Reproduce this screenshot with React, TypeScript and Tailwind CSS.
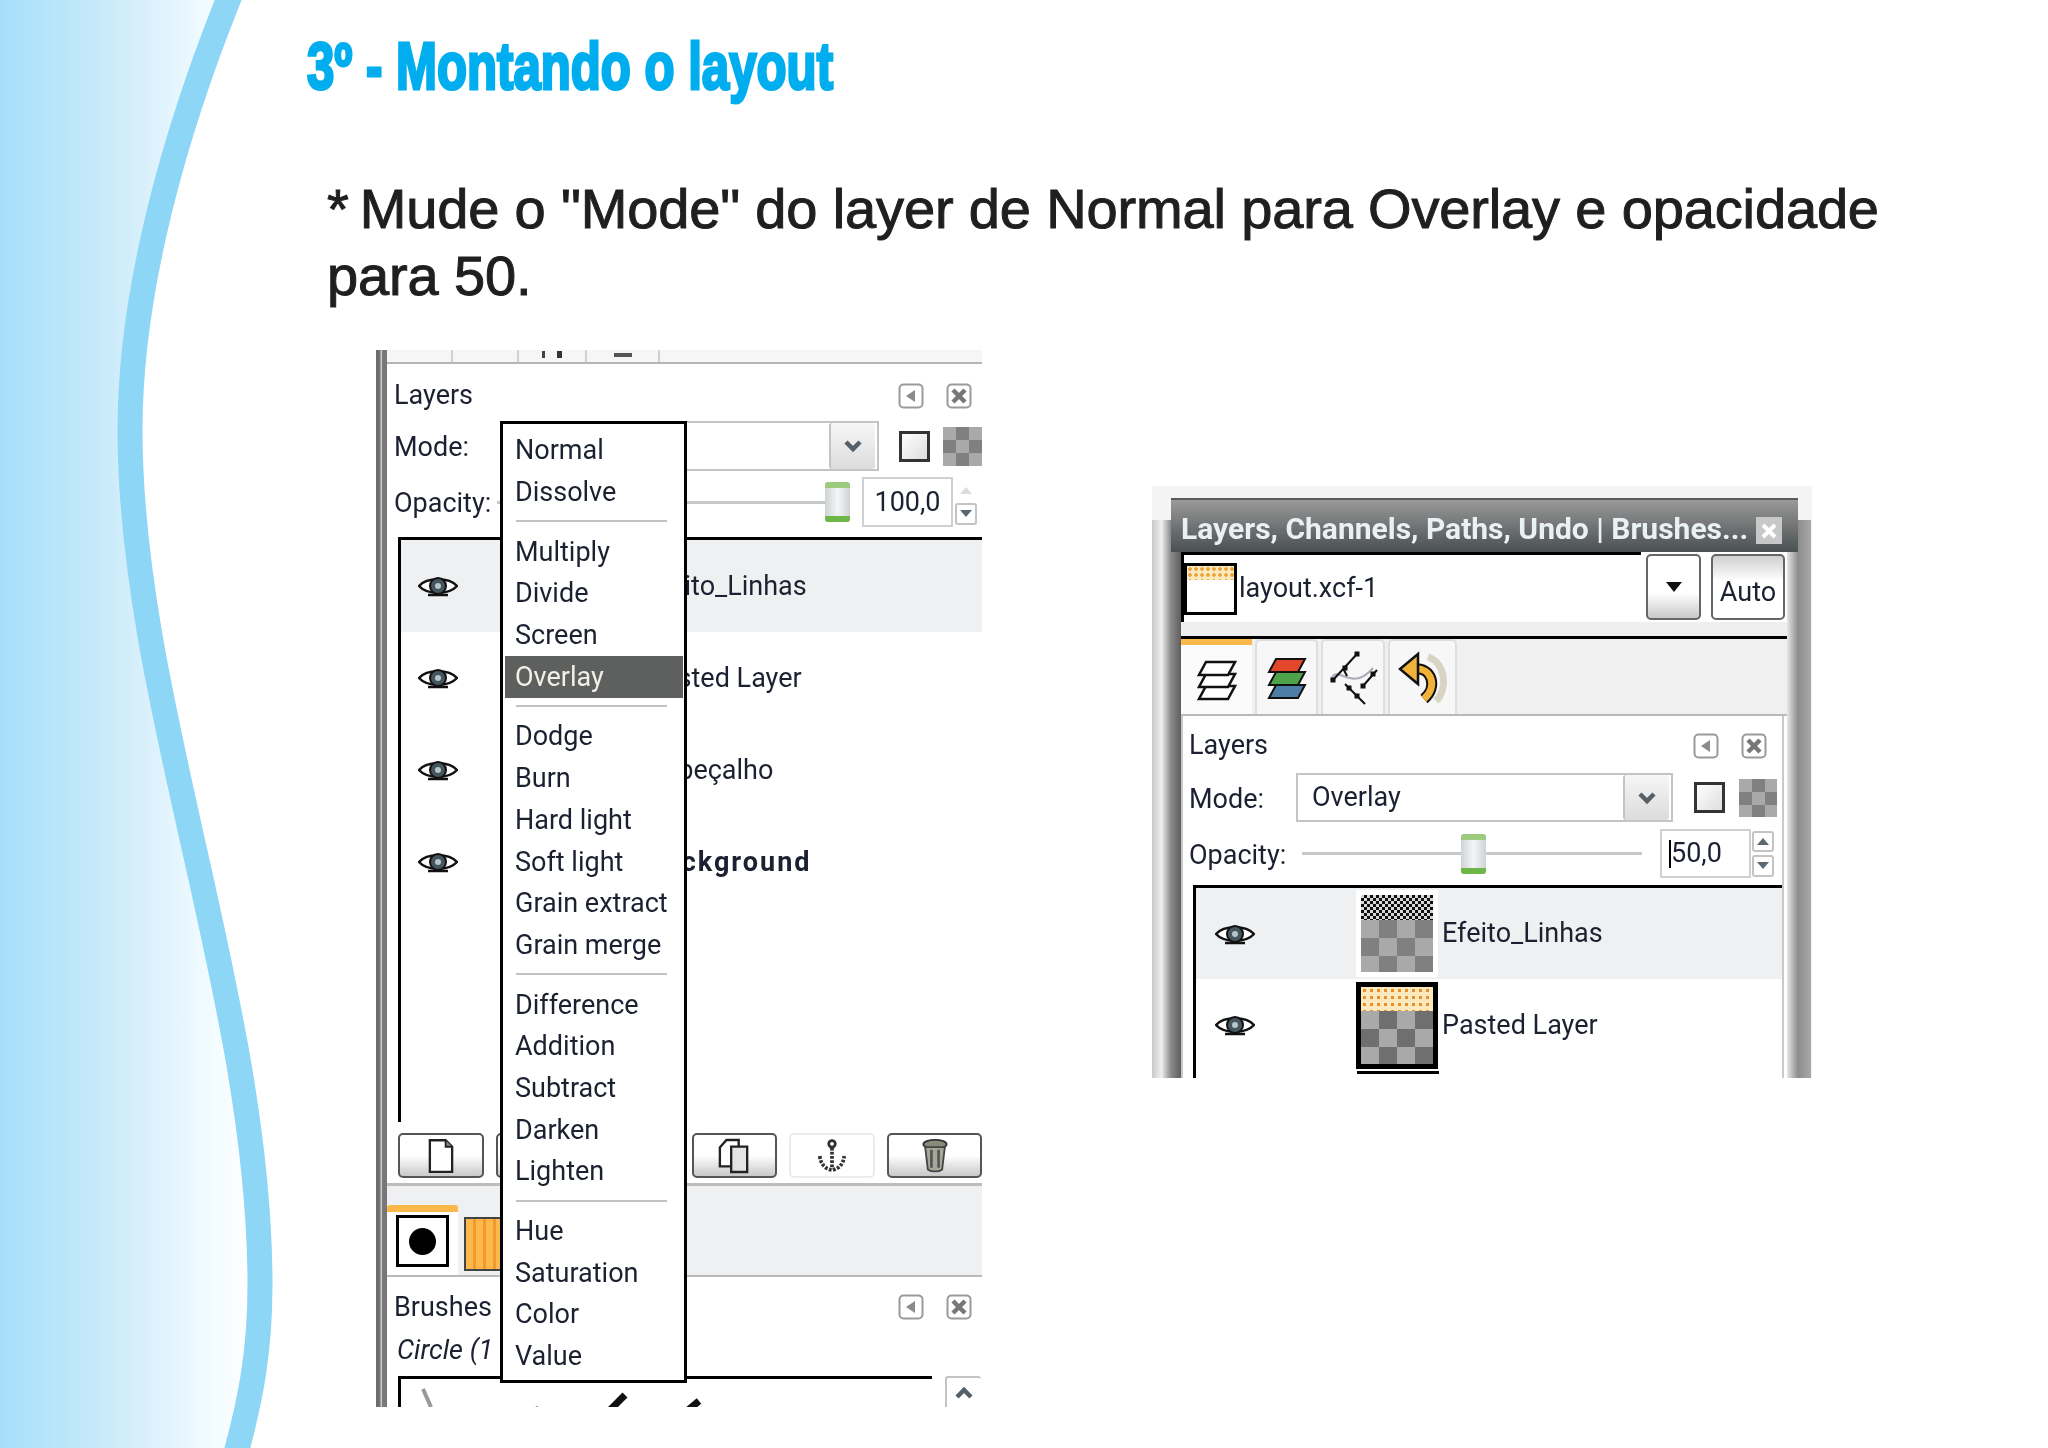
const ui = "font-['Roboto',sans-serif] text-[27px] leading-none text-[#1b2130] whitespace-nowrap";

const modeGroups = [
  ['Normal', 'Dissolve'],
  ['Multiply', 'Divide', 'Screen', 'Overlay'],
  ['Dodge', 'Burn', 'Hard light', 'Soft light', 'Grain extract', 'Grain merge'],
  ['Difference', 'Addition', 'Subtract', 'Darken', 'Lighten'],
  ['Hue', 'Saturation', 'Color', 'Value'],
];

function Eye() {
  return (
    <svg viewBox="0 0 40 24" className="h-[24px] w-[40px] shrink-0">
      <path d="M1 12 C9 3 31 3 39 12 C31 21 9 21 1 12 Z" fill="#fff" stroke="#111" strokeWidth="2.5" />
      <circle cx="20" cy="12" r="8" fill="#46565f" stroke="#111" strokeWidth="2" />
      <circle cx="20" cy="12" r="3" fill="#b9c4c9" />
      <path d="M10 21 H30" stroke="#111" strokeWidth="2.5" />
    </svg>
  );
}

function DockButtons() {
  return (
    <div className="ml-auto flex gap-[22px]">
      <svg viewBox="0 0 26 26" className="h-[26px] w-[26px]">
        <rect x="1.5" y="1.5" width="23" height="23" rx="4" fill="#fff" stroke="#9a9a9a" strokeWidth="2" />
        <path d="M17 7 V19 L8 13 Z" fill="#8b8b8b" />
      </svg>
      <svg viewBox="0 0 26 26" className="h-[26px] w-[26px]">
        <rect x="1.5" y="1.5" width="23" height="23" rx="4" fill="#fff" stroke="#9a9a9a" strokeWidth="2" />
        <path d="M7 7 L19 19 M19 7 L7 19" stroke="#777" strokeWidth="4.5" />
      </svg>
    </div>
  );
}

function ComboArrow() {
  return (
    <div className="ml-auto flex h-full w-[46px] items-center justify-center rounded-[3px] border-l-2 border-[#c4c4c4] bg-gradient-to-b from-[#f6f6f6] to-[#dcdcdc]">
      <svg viewBox="0 0 20 14" className="h-[14px] w-[20px]">
        <path d="M3 3 L10 10 L17 3" fill="none" stroke="#566068" strokeWidth="4.5" />
      </svg>
    </div>
  );
}

function Thumb({ className }: { className: string }) {
  return (
    <div className={`flex h-[40px] flex-col justify-between rounded-[3px] bg-gradient-to-r from-[#cfd3d6] via-[#f4f5f5] to-[#cfd3d6] ${className}`}>
      <div className="h-[6px] rounded-t-[3px] bg-[#9ccb7f]" />
      <div className="h-[6px] rounded-b-[3px] bg-[#6fb648]" />
    </div>
  );
}

function Spin({ dim }: { dim?: boolean }) {
  return (
    <div className="flex w-[22px] flex-col gap-[3px]">
      <div className={`flex h-[21px] items-center justify-center rounded-[3px] ${dim ? '' : 'border-2 border-[#c4c4c4]'}`}>
        <svg viewBox="0 0 14 10" className="h-[10px] w-[14px]">
          <path d="M1 9 L7 2 L13 9 Z" fill={dim ? '#dcdcdc' : '#5c6770'} />
        </svg>
      </div>
      <div className="flex h-[22px] items-center justify-center rounded-[3px] border-2 border-[#c4c4c4]">
        <svg viewBox="0 0 14 10" className="h-[10px] w-[14px]">
          <path d="M1 1 L7 8 L13 1 Z" fill="#5c6770" />
        </svg>
      </div>
    </div>
  );
}

function Checkbox() {
  return <div className="h-[31px] w-[31px] border-[3px] border-[#333] bg-gradient-to-br from-white to-[#dedede]" />;
}

function ToolButton({ className, children }: { className: string; children?: React.ReactNode }) {
  return (
    <div className={`flex h-[45px] items-center justify-center rounded-[5px] border-2 border-[#555] bg-gradient-to-b from-white from-50% to-[#c9c9c9] ${className}`}>
      {children}
    </div>
  );
}

function LayerRow({ name, bold, active }: { name: string; bold?: boolean; active?: boolean }) {
  return (
    <div className={`flex h-[92px] items-center pl-[17px] ${active ? 'bg-[#eff0f1]' : ''}`}>
      <Eye />
      <span className={`${ui} ml-[188px] ${bold ? 'font-bold tracking-[2px]' : ''}`}>{name}</span>
    </div>
  );
}

function ModeMenu() {
  return (
    <div className="absolute left-[124px] top-[71px] flex h-[962px] w-[187px] flex-col border-[3px] border-black bg-white pt-[6px]">
      {modeGroups.map((group, i) => (
        <div key={group[0]}>
          {i > 0 && (
            <div className="flex h-[18px] pl-[13px] pt-[7px]">
              <div className="h-[2px] w-[151px] bg-[#c2c2c2]" />
            </div>
          )}
          {group.map((item) => (
            <div
              key={item}
              className={`flex h-[41.7px] items-center pl-[12px] ${ui} ${item === 'Overlay' ? 'mr-[1px] ml-[2px] !pl-[10px] bg-[#5d605f] !text-[#f2efe6]' : ''}`}
            >
              {item}
            </div>
          ))}
        </div>
      ))}
    </div>
  );
}

function LeftPanel() {
  return (
    <div className="relative flex h-[1057px] w-[606px] overflow-hidden bg-white blur-[0.5px]">
      <div className="w-[11px] shrink-0 bg-gradient-to-r from-[#6d6d6d] from-30% via-[#c9c9c9] via-50% to-[#777] to-60%" />
      <div className="flex min-w-0 flex-1 flex-col">
        <div className="flex h-[14px] shrink-0 border-b-2 border-[#b5b5b5] bg-[#f6f6f6] pl-[64px]">
          <div className="w-[68px] border-x-2 border-[#d0d0d0]" />
          <div className="flex w-[68px] justify-center gap-[12px] border-r-2 border-[#d0d0d0]">
            <div className="mt-[1px] h-[7px] w-[3px] bg-[#444]" />
            <div className="mt-[1px] h-[7px] w-[5px] bg-[#333]" />
          </div>
          <div className="flex w-[73px] justify-center border-r-2 border-[#d0d0d0]">
            <div className="mt-[3px] h-[4px] w-[18px] bg-[#555]" />
          </div>
        </div>
        <div className="flex h-[57px] shrink-0 items-center pl-[7px] pr-[10px] pt-[6px]">
          <span className={ui}>Layers</span>
          <DockButtons />
        </div>
        <div className="flex h-[50px] shrink-0 items-center pl-[7px]">
          <span className={`${ui} w-[112px] pt-[3px]`}>Mode:</span>
          <div className="h-full w-[378px] border-2 border-[#c4c4c4] pr-[2px]">
            <div className="flex h-full"><ComboArrow /></div>
          </div>
          <div className="ml-[20px]"><Checkbox /></div>
          <div className="ml-[13px] h-[39px] w-[39px] bg-[repeating-conic-gradient(#808080_0_25%,#a9a9a9_0_50%)] bg-[length:26px_26px]" />
        </div>
        <div className="mt-[4px] flex h-[54px] shrink-0 items-center pl-[7px]">
          <span className={`${ui} w-[103px] pt-[3px]`}>Opacity:</span>
          <div className="h-[3px] w-[328px] bg-[#c8c8c8]" />
          <Thumb className="w-[25px]" />
          <div className={`${ui} ml-[12px] flex h-[50px] w-[91px] items-center justify-center border-2 border-[#d0d0d0]`}>100,0</div>
          <div className="ml-[2px]"><Spin dim /></div>
        </div>
        <div className="ml-[11px] mt-[8px] h-[585px] shrink-0 border-l-[3px] border-t-[3px] border-black">
          <LayerRow name="Efeito_Linhas" active />
          <LayerRow name="Pasted Layer" />
          <LayerRow name="Cabeçalho" />
          <LayerRow name="Background" bold />
        </div>
        <div className="ml-[11px] mt-[11px] flex shrink-0 gap-[12px]">
          <ToolButton className="w-[86px]">
            <svg viewBox="0 0 28 38" className="h-[36px] w-[26px]">
              <path d="M2 2 H19 L26 9 V36 H2 Z" fill="#fff" stroke="#222" strokeWidth="2.5" />
              <path d="M19 2 V9 H26" fill="#888" stroke="#222" strokeWidth="2" />
            </svg>
          </ToolButton>
          <ToolButton className="w-[86px]" />
          <ToolButton className="w-[86px]" />
          <ToolButton className="w-[86px]">
            <svg viewBox="0 0 34 38" className="h-[36px] w-[32px]">
              <path d="M9 2 H22 V30 H2 V10 Z" fill="#fff" stroke="#222" strokeWidth="2.5" />
              <path d="M14 9 H31 V36 H14 Z" fill="#e4e4e4" stroke="#222" strokeWidth="2.5" />
            </svg>
          </ToolButton>
          <div className="flex h-[45px] w-[86px] items-center justify-center rounded-[5px] border-2 border-[#ececec]">
            <svg viewBox="0 0 32 36" className="h-[34px] w-[30px]">
              <circle cx="16" cy="5" r="3.5" fill="none" stroke="#333" strokeWidth="3" />
              <path d="M16 9 V32 M3 18 C4 28 10 32 16 33 C22 32 28 28 29 18" fill="none" stroke="#333" strokeWidth="4" strokeDasharray="3 1.5" />
            </svg>
          </div>
          <ToolButton className="w-[95px]">
            <svg viewBox="0 0 30 38" className="h-[34px] w-[28px]">
              <ellipse cx="15" cy="6" rx="13" ry="5" fill="#8a8a7c" stroke="#333" strokeWidth="2" />
              <path d="M4 9 L7 34 C11 37 19 37 23 34 L26 9 Z" fill="#a8a89a" stroke="#444" strokeWidth="2" />
              <path d="M11 12 V32 M19 12 V32" stroke="#555" strokeWidth="3" />
            </svg>
          </ToolButton>
        </div>
        <div className="mt-[5px] h-[3px] shrink-0 bg-[#bdbdbd]" />
        <div className="h-[19px] shrink-0 bg-[#eff0f1]" />
        <div className="flex h-[72px] shrink-0 items-start border-b-2 border-[#b9b9b9] bg-[#eff0f1]">
          <div className="flex h-full w-[71px] items-start justify-center rounded-t-[3px] border-t-[7px] border-[#fab84a] bg-white pt-[3px]">
            <div className="flex h-[52px] w-[53px] items-center justify-center border-[3px] border-black bg-white">
              <div className="h-[27px] w-[27px] rounded-full bg-black" />
            </div>
          </div>
          <div className="ml-[6px] mt-[12px] h-[54px] w-[60px] border-2 border-[#444] bg-[repeating-linear-gradient(90deg,#fdb94d_0_7px,#f39a2b_7px_10px)]" />
        </div>
        <div className="flex h-[60px] shrink-0 items-center pl-[7px] pr-[10px]">
          <span className={ui}>Brushes</span>
          <DockButtons />
        </div>
        <span className={`${ui} pl-[10px] italic`}>Circle (1</span>
        <div className="ml-[11px] mt-[12px] flex flex-1">
          <div className="relative w-[534px] border-l-[3px] border-t-[3px] border-black">
            <svg viewBox="0 0 534 40" className="h-[40px] w-[534px]">
              <path d="M22 10 L30 28" stroke="#999" strokeWidth="4" />
              <circle cx="136" cy="30" r="2.5" fill="#111" />
              <path d="M208 32 L224 16" stroke="#111" strokeWidth="7" />
              <path d="M286 32 L298 22" stroke="#111" strokeWidth="7" />
            </svg>
          </div>
          <div className="ml-[13px] flex h-[40px] w-[36px] justify-center rounded-t-[3px] border-l-2 border-t-2 border-[#c4c4c4] pt-[8px]">
            <svg viewBox="0 0 20 14" className="h-[14px] w-[20px]">
              <path d="M3 11 L10 4 L17 11" fill="none" stroke="#566068" strokeWidth="4.5" />
            </svg>
          </div>
        </div>
      </div>
      <ModeMenu />
    </div>
  );
}

function TabLayers() {
  return (
    <svg viewBox="0 0 40 48" className="h-[48px] w-[40px]">
      {[30, 18, 6].map((y) => (
        <path key={y} d={`M9 ${y} H38 L31 ${y + 13} H2 Z`} fill="#fff" stroke="#111" strokeWidth="2.5" />
      ))}
    </svg>
  );
}

function TabChannels() {
  return (
    <svg viewBox="0 0 40 48" className="h-[48px] w-[40px]">
      <path d="M9 31 H38 L31 44 H2 Z" fill="#4c7ea8" stroke="#111" strokeWidth="2" />
      <path d="M9 18 H38 L31 31 H2 Z" fill="#4ea34a" stroke="#111" strokeWidth="2" />
      <path d="M9 5 H38 L31 18 H2 Z" fill="#e2472c" stroke="#111" strokeWidth="2" />
    </svg>
  );
}

function TabPaths() {
  return (
    <svg viewBox="0 0 56 56" className="h-[56px] w-[56px]">
      <path d="M6 30 C12 12 26 44 48 18" fill="none" stroke="#aab" strokeWidth="2" />
      <path d="M8 30 L32 4 M22 26 L18 18 M38 36 L52 20 M20 34 L40 54" stroke="#111" strokeWidth="2" />
      {[[8, 30], [20, 18], [32, 4], [38, 36], [48, 24], [24, 38], [32, 46]].map(([x, y]) => (
        <rect key={`${x}-${y}`} x={x - 2.5} y={y - 2.5} width="5" height="5" fill="#111" />
      ))}
    </svg>
  );
}

function TabUndo() {
  return (
    <svg viewBox="0 0 50 54" className="h-[54px] w-[50px]">
      <path d="M30 6 C48 12 50 38 38 50" fill="none" stroke="#d8d4c4" strokeWidth="7" />
      <path d="M16 18 C34 16 40 36 26 48" fill="none" stroke="#111" strokeWidth="11" />
      <path d="M16 18 C34 16 40 36 26 48" fill="none" stroke="#f1b23a" strokeWidth="7" />
      <path d="M20 3 L2 18 L20 33 Z" fill="#f1b23a" stroke="#111" strokeWidth="2.5" />
    </svg>
  );
}

function RightPanel() {
  return (
    <div className="ml-[170px] mt-[136px] flex h-[592px] w-[660px] bg-[#f4f4f4] blur-[0.5px]">
      <div className="mt-[34px] w-[19px] shrink-0 bg-gradient-to-r from-[#c9c9c9] via-[#f0f0f0] to-[#8a8a8a]" />
      <div className="mt-[12px] flex w-[627px] shrink-0 flex-col border-t-2 border-[#5a5a5a]">
        <div className="flex h-[52px] shrink-0 items-end justify-between bg-gradient-to-b from-[#9a9a9a] to-[#4b5052] pb-[8px] pl-[10px] pr-[16px]">
          <span className="font-['Roboto',sans-serif] text-[30px] font-bold leading-none text-[#e9f1f5] whitespace-nowrap">Layers, Channels, Paths, Undo | Brushes...</span>
          <div className="flex h-[27px] w-[26px] shrink-0 items-center justify-center bg-[#c8c8c8]">
            <svg viewBox="0 0 16 16" className="h-[16px] w-[16px]">
              <path d="M2 2 L14 14 M14 2 L2 14" stroke="#fff" strokeWidth="4" />
            </svg>
          </div>
        </div>
        <div className="flex min-h-0 flex-1 bg-white">
          <div className="w-[10px] shrink-0 bg-gradient-to-r from-[#8a8a8a] to-[#5e5e5e]" />
          <div className="flex min-w-0 flex-1 flex-col">
            <div className="flex h-[70px] shrink-0 items-center">
              <div className="flex h-full w-[460px] items-center border-l-[3px] border-t-[3px] border-black">
                <div className="h-[52px] w-[53px] border-[3px] border-black bg-white">
                  <div className="h-[14px] bg-[#fbe9bd] bg-[radial-gradient(#e8a33a_1.5px,transparent_2px)] bg-[length:6px_6px]" />
                </div>
                <span className={`${ui} ml-[2px]`}>layout.xcf-1</span>
              </div>
              <div className="ml-[5px] flex h-[66px] w-[55px] items-center justify-center rounded-[5px] border-2 border-[#666] bg-gradient-to-b from-white from-60% to-[#c9c9c9]">
                <svg viewBox="0 0 16 10" className="h-[10px] w-[16px]"><path d="M0 0 H16 L8 10 Z" fill="#111" /></svg>
              </div>
              <div className={`${ui} ml-[10px] flex h-[66px] w-[74px] items-end justify-center rounded-[5px] border-2 border-[#666] bg-gradient-to-b from-[#d0d0d0] to-white to-40% pb-[12px]`}>Auto</div>
            </div>
            <div className="h-[14px] shrink-0 bg-[#efefef]" />
            <div className="h-[3px] shrink-0 bg-black" />
            <div className="flex h-[77px] shrink-0 items-stretch gap-[3px] border-b-2 border-[#b9b9b9] bg-[#f0f0f0] pr-[3px]">
              <div className="flex w-[71px] items-center justify-center border-t-[6px] border-[#fab84a] bg-[#fbfbfb]"><TabLayers /></div>
              <div className="flex w-[63px] items-center justify-center rounded-t-[5px] border-x-2 border-t-2 border-[#dedede] bg-[#f7f7f7]"><TabChannels /></div>
              <div className="flex w-[64px] items-center justify-center rounded-t-[5px] border-x-2 border-t-2 border-[#dedede] bg-[#f7f7f7]"><TabPaths /></div>
              <div className="flex w-[69px] items-center justify-center rounded-t-[5px] border-x-2 border-t-2 border-[#dedede] bg-[#f7f7f7]"><TabUndo /></div>
            </div>
            <div className="mr-[3px] flex min-h-0 flex-1 flex-col border-x-2 border-[#c9c9c9] bg-white pl-[6px]">
              <div className="flex h-[57px] shrink-0 items-center pr-[15px] pt-[2px]">
                <span className={ui}>Layers</span>
                <DockButtons />
              </div>
              <div className="flex h-[49px] shrink-0 items-center">
                <span className={`${ui} w-[107px] pt-[3px]`}>Mode:</span>
                <div className={`${ui} flex h-full w-[377px] items-center border-2 border-[#c4c4c4] pl-[14px] pr-[2px]`}>
                  Overlay
                  <ComboArrow />
                </div>
                <div className="ml-[21px]"><Checkbox /></div>
                <div className="ml-[14px] h-[38px] w-[38px] bg-[repeating-conic-gradient(#808080_0_25%,#a9a9a9_0_50%)] bg-[length:26px_26px]" />
              </div>
              <div className="mt-[7px] flex h-[49px] shrink-0 items-center">
                <span className={`${ui} w-[113px] pt-[3px]`}>Opacity:</span>
                <div className="relative flex h-[3px] w-[340px] items-center bg-[#c8c8c8]">
                  <Thumb className="absolute left-[159px] w-[25px]" />
                </div>
                <div className={`${ui} ml-[18px] flex h-[49px] w-[91px] items-center border-2 border-[#d0d0d0] pl-[7px]`}>
                  <span className="h-[28px] w-[2px] bg-black" />50,0
                </div>
                <div className="ml-[1px]"><Spin /></div>
              </div>
              <div className="ml-[4px] mt-[7px] flex min-h-0 flex-1 flex-col overflow-hidden border-l-[3px] border-t-[3px] border-black">
                <div className="flex h-[91px] shrink-0 items-center bg-[#eff0f1] pl-[19px]">
                  <Eye />
                  <div className="ml-[101px] flex h-[87px] w-[82px] flex-col bg-white p-[5px]">
                    <div className="h-[25px] bg-[repeating-conic-gradient(#111_0_25%,#d8d8d8_0_50%)] bg-[length:6px_6px]" />
                    <div className="flex-1 bg-[repeating-conic-gradient(#808080_0_25%,#a9a9a9_0_50%)] bg-[length:36px_36px]" />
                  </div>
                  <span className={`${ui} ml-[4px]`}>Efeito_Linhas</span>
                </div>
                <div className="flex h-[92px] shrink-0 items-center pl-[19px]">
                  <Eye />
                  <div className="ml-[101px] flex h-[87px] w-[82px] flex-col border-[5px] border-black bg-white">
                    <div className="h-[24px] bg-[#fbe9bd] bg-[radial-gradient(#e58f2e_1.5px,transparent_2px)] bg-[length:7px_7px]" />
                    <div className="flex-1 bg-[repeating-conic-gradient(#6f6f6f_0_25%,#a9a9a9_0_50%)] bg-[length:36px_36px]" />
                  </div>
                  <span className={`${ui} ml-[4px]`}>Pasted Layer</span>
                </div>
                <div className="ml-[161px] h-[3px] w-[82px] bg-black" />
              </div>
            </div>
          </div>
          <div className="w-[11px] shrink-0 bg-gradient-to-r from-[#e8e8e8] to-[#8c8c8c]" />
        </div>
      </div>
      <div className="mt-[34px] w-[13px] shrink-0 bg-gradient-to-r from-[#8c8c8c] to-[#a8a8a8]" />
    </div>
  );
}

export default function App() {
  return (
    <div className="relative h-[1448px] w-[2048px] overflow-hidden bg-white">
      {/* curved side decoration */}
      <svg viewBox="0 0 2048 1448" className="absolute left-0 top-0 h-[1448px] w-[2048px]">
        <defs>
          <linearGradient id="side" x1="0" x2="250" y1="0" y2="0" gradientUnits="userSpaceOnUse">
            <stop offset="0" stopColor="#a6def9" />
            <stop offset="0.25" stopColor="#bae6fb" />
            <stop offset="0.55" stopColor="#d6effb" />
            <stop offset="0.8" stopColor="#eefaff" />
            <stop offset="1" stopColor="#ffffff" />
          </linearGradient>
        </defs>
        <path d="M233 -12 C175 130 130 290 130 430 C130 700 260 1000 260 1285 C260 1350 251 1400 234 1460 H0 V-12 Z" fill="url(#side)" />
        <path d="M233 -12 C175 130 130 290 130 430 C130 700 260 1000 260 1285 C260 1350 251 1400 234 1460" fill="none" stroke="#8dd6f6" strokeWidth="25" />
      </svg>
      <div className="relative flex flex-col">
        <h1 className="ml-[307px] mt-[30px] origin-left scale-x-[0.745] whitespace-nowrap font-['Liberation_Sans',sans-serif] text-[66px] font-bold leading-[72px] text-[#00aeef] [-webkit-text-stroke:3px_#00aeef]">
          3º - Montando o layout
        </h1>
        <p className="ml-[327px] mt-[73px] w-[1640px] font-['Liberation_Sans',sans-serif] text-[56px] leading-[67px] tracking-[-0.15px] text-[#1f1f1f] [-webkit-text-stroke:1px_#1f1f1f]">
          *{'\u2009'}Mude o "Mode" do layer de Normal para Overlay e opacidade para 50.
        </p>
        <div className="ml-[376px] mt-[41px] flex items-start">
          <LeftPanel />
          <RightPanel />
        </div>
      </div>
    </div>
  );
}
